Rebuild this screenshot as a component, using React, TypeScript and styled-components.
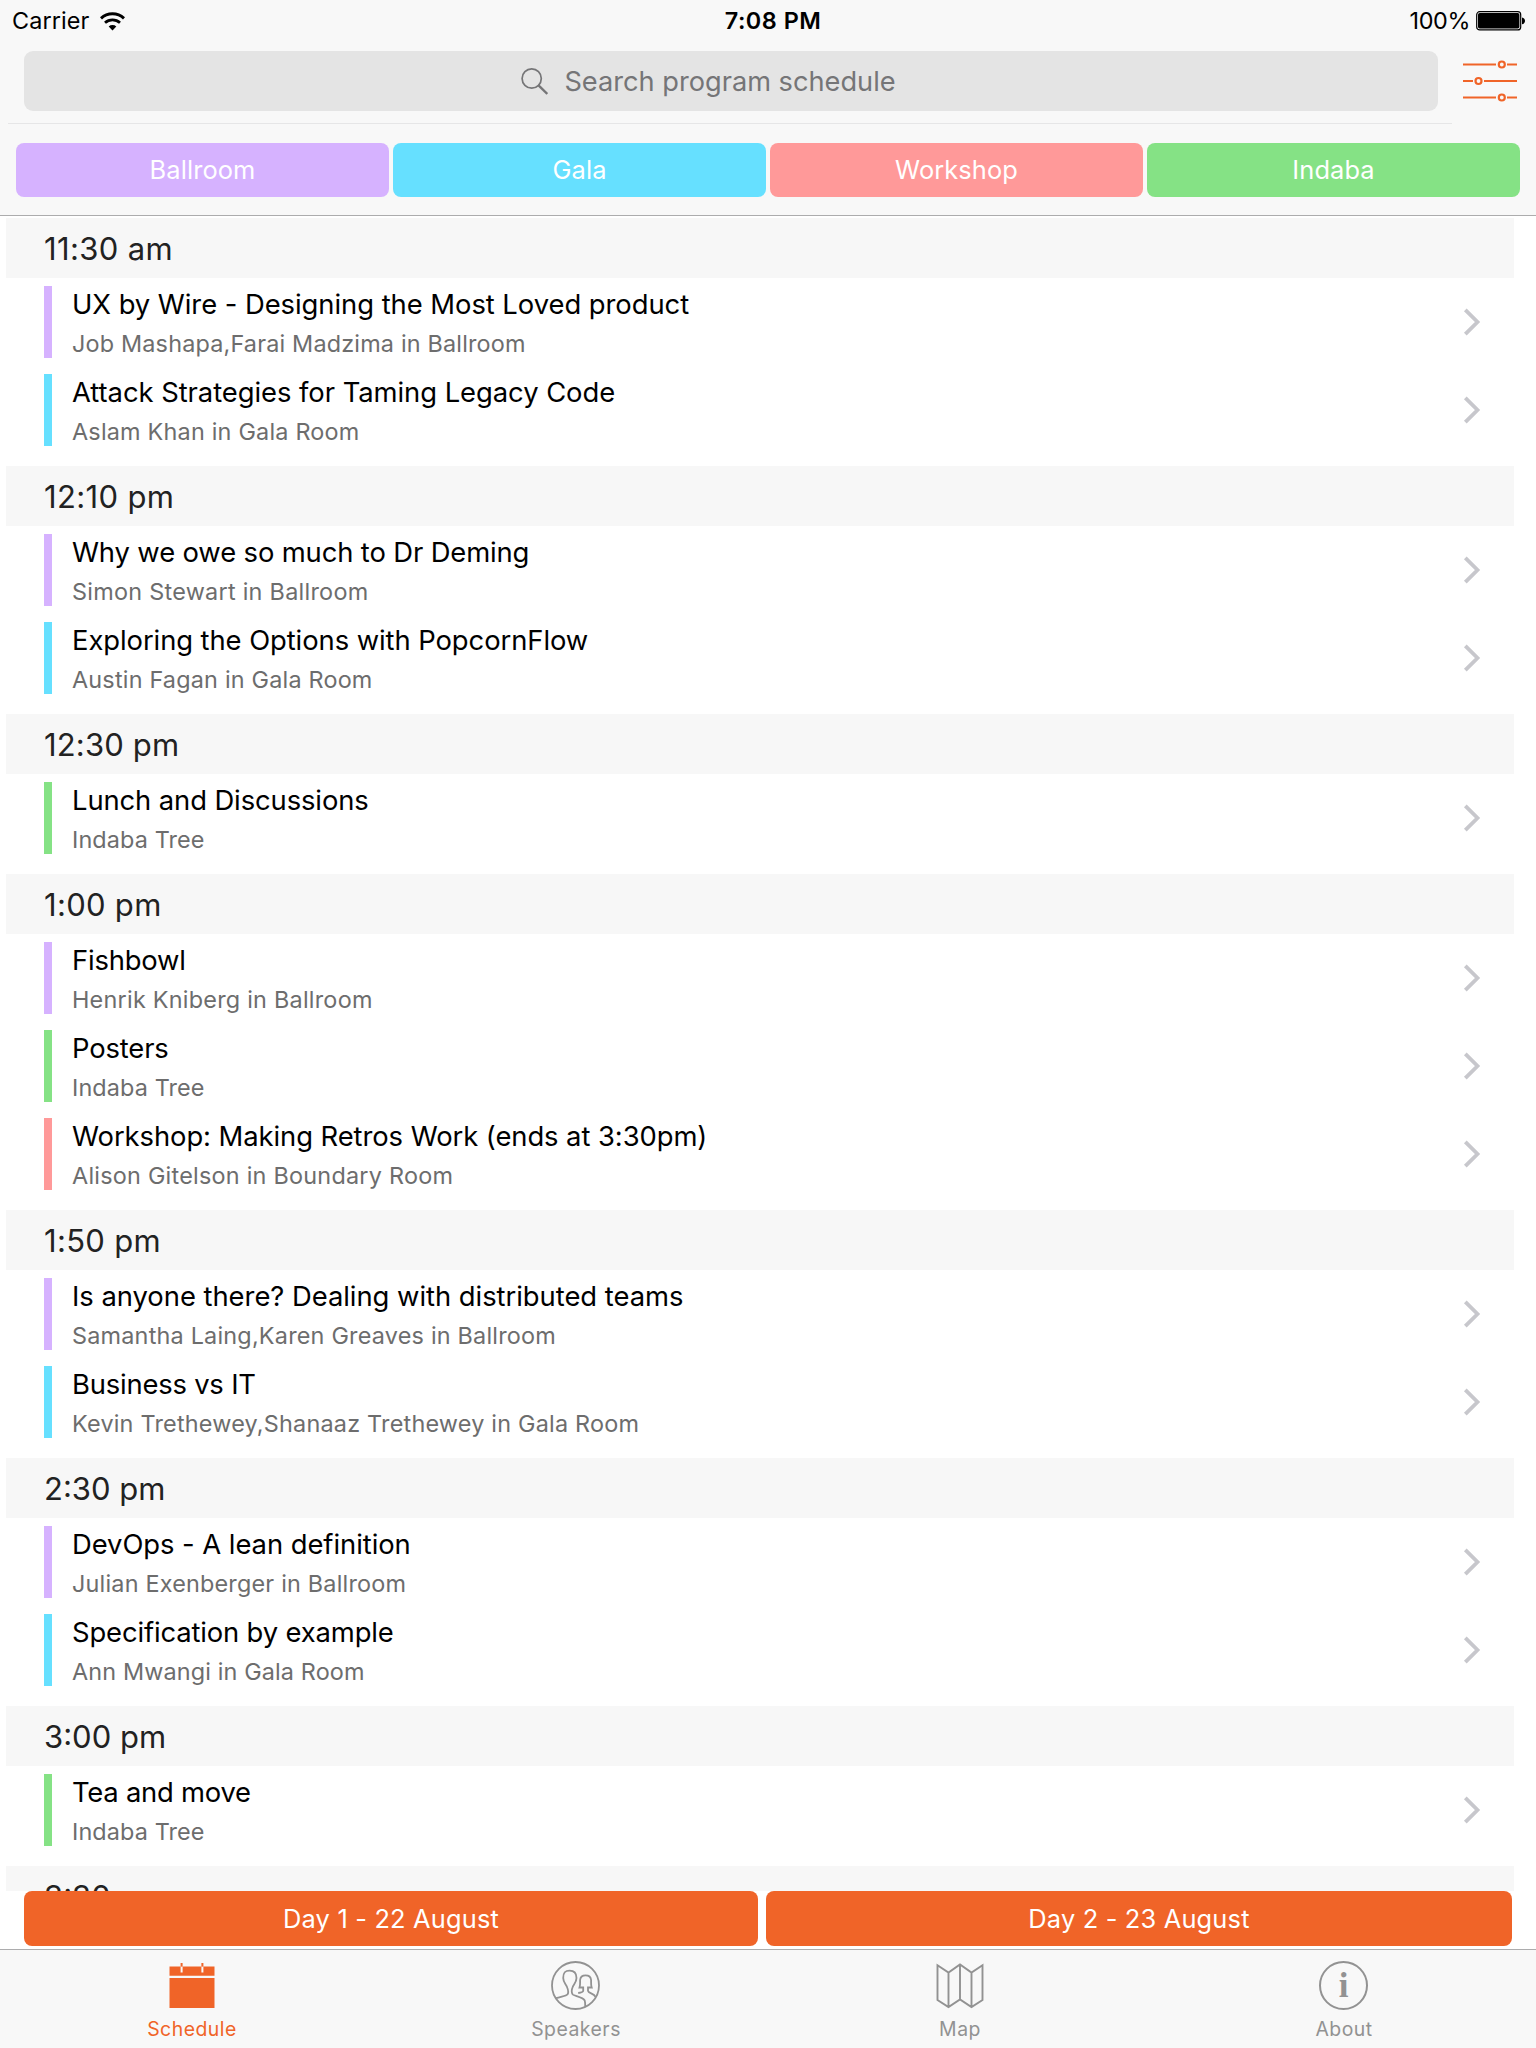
import React from "react";
import styled, { createGlobalStyle } from "styled-components";

const COLORS = {
  ballroom: "#d6b2ff",
  gala: "#66e0ff",
  workshop: "#ff9999",
  indaba: "#85e285",
  accent: "#f06428",
};

type Room = "ballroom" | "gala" | "workshop" | "indaba";

const GlobalStyle = createGlobalStyle`
  * { box-sizing: border-box; }
  body { margin: 0; background: #fff; }
`;

const Screen = styled.div`
  width: 1536px;
  height: 2048px;
  display: flex;
  flex-direction: column;
  overflow: hidden;
  background: #fff;
  font-family: Inter, "Liberation Sans", sans-serif;
  color: #000;
`;

const Header = styled.header`
  height: 216px;
  flex: none;
  background: #f8f8f8;
  border-bottom: 1px solid #acacad;
  display: flex;
  flex-direction: column;
`;

const StatusBar = styled.div`
  height: 40px;
  padding: 2px 10px 0 12px;
  display: grid;
  grid-template-columns: 1fr auto 1fr;
  align-items: center;
  font-size: 23.4px;
  line-height: 28px;
`;

const StatusSide = styled.div<{ $end?: boolean }>`
  display: flex;
  align-items: center;
  justify-content: ${(p) => (p.$end ? "flex-end" : "flex-start")};
  gap: ${(p) => (p.$end ? 6 : 11)}px;
  letter-spacing: ${(p) => (p.$end ? -0.4 : 0.1)}px;
`;

const Clock = styled.div`
  font-weight: 600;
  letter-spacing: 0.5px;
  padding-left: 8px;
`;

const SearchRow = styled.div`
  height: 84px;
  padding: 11px 18px 0 24px;
  display: flex;
  align-items: flex-start;
  gap: 24px;
`;

const SearchField = styled.div`
  width: 1414px;
  height: 60px;
  border-radius: 9px;
  background: #e4e4e4;
  color: #757577;
  display: flex;
  align-items: center;
  justify-content: center;
  gap: 16px;
  padding-right: 45px;
  font-size: 27.2px;
`;

const FilterButton = styled.div`
  height: 60px;
  display: flex;
  align-items: center;
`;

const Hairline = styled.div`
  height: 1px;
  margin: -1px 84px 0 8px;
  background: #e6e6e7;
`;

const Rooms = styled.div`
  margin-top: 19px;
  padding: 0 16px;
  display: grid;
  grid-template-columns: repeat(4, 1fr);
  gap: 4px;
`;

const RoomButton = styled.div<{ $room: Room }>`
  height: 54px;
  padding-bottom: 2px;
  border-radius: 8px;
  background: ${(p) => COLORS[p.$room]};
  color: #fff;
  display: flex;
  align-items: center;
  justify-content: center;
  font-size: 25.4px;
  letter-spacing: 0.1px;
`;

const List = styled.main`
  height: 1675px;
  flex: none;
  overflow: hidden;
  padding: 2px 22px 0 6px;
`;

const Section = styled.section`
  padding-bottom: 12px;
`;

const SectionTitle = styled.h2<{ $spacing: number }>`
  margin: 0;
  height: 60px;
  padding-left: 38px;
  background: #f7f7f7;
  color: #222;
  font-size: 31px;
  font-weight: 400;
  line-height: 62px;
  letter-spacing: ${(p) => p.$spacing}px;
`;

const Row = styled.div`
  height: 88px;
  padding: 8px 33px 8px 38px;
  display: flex;
  align-items: center;
`;

const RoomBar = styled.div<{ $room: Room }>`
  width: 8px;
  height: 72px;
  margin-right: 20px;
  background: ${(p) => COLORS[p.$room]};
`;

const RowText = styled.div`
  flex: 1;
  height: 72px;
`;

const TalkTitle = styled.div<{ $spacing: number }>`
  font-size: 27.4px;
  line-height: 36px;
  letter-spacing: ${(p) => p.$spacing}px;
`;

const TalkMeta = styled.div<{ $spacing: number }>`
  margin-top: 4px;
  color: #6d6d6d;
  font-size: 23.4px;
  line-height: 36px;
  letter-spacing: ${(p) => p.$spacing}px;
`;

const Days = styled.div`
  height: 58px;
  flex: none;
  padding: 0 24px;
  display: flex;
  gap: 8px;
`;

const DayButton = styled.div<{ $width: number }>`
  width: ${(p) => p.$width}px;
  height: 55px;
  border-radius: 8px;
  background: ${COLORS.accent};
  color: #fff;
  display: flex;
  align-items: center;
  justify-content: center;
  font-size: 25.4px;
  letter-spacing: 0.18px;
`;

const TabBar = styled.nav`
  height: 99px;
  border-top: 1px solid #acacad;
  background: #f8f8f8;
  display: grid;
  grid-template-columns: repeat(4, 1fr);
`;

const Tab = styled.div<{ $active?: boolean }>`
  display: flex;
  flex-direction: column;
  align-items: center;
  padding-top: 11px;
  color: ${(p) => (p.$active ? COLORS.accent : "#929292")};
  font-size: 19.4px;
  line-height: 24px;
  letter-spacing: 0.5px;
  svg { margin: 0 1px 6px 0; }
`;

const InfoGlyph = styled.div`
  width: 49px;
  height: 49px;
  margin: 0 1px 7px 0;
  border: 2px solid #929292;
  border-radius: 50%;
  display: flex;
  align-items: center;
  justify-content: center;
  font: bold 35px/45px "Liberation Serif", serif;
  letter-spacing: 0;
`;

const WifiIcon = () => (
  <svg width="25" height="19" viewBox="0 0 25 19" fill="none" stroke="#000">
    <path d="M1 6.3a17 17 0 0 1 23 0" strokeWidth="3" />
    <path d="M5 10.8a11.2 11.2 0 0 1 15 0" strokeWidth="2.8" />
    <path d="M12.5 18.4 8.7 14.6a5.6 5.6 0 0 1 7.6 0Z" fill="#000" stroke="none" />
  </svg>
);

const BatteryIcon = () => (
  <svg width="50" height="20" viewBox="0 0 50 20">
    <rect x="0.7" y="0.7" width="44" height="18.2" rx="3" fill="none" stroke="#000" strokeWidth="1.2" />
    <rect x="2" y="2" width="41.4" height="15.6" rx="1.8" fill="#000" />
    <path d="M46 6.4c4 .4 4 6.4 0 6.8Z" fill="#000" />
  </svg>
);

const SearchIcon = () => (
  <svg width="27" height="27" viewBox="0 0 27 27" fill="none" stroke="#757577">
    <circle cx="10.7" cy="10.5" r="9.6" strokeWidth="1.7" />
    <path d="m17.3 17.2 9 8.7" strokeWidth="2.4" />
  </svg>
);

const FilterIcon = () => (
  <svg width="56" height="44" viewBox="0 0 56 44" fill="none" stroke={COLORS.accent} strokeWidth="2">
    <path d="M1 5.500h33M45 5.500h10M1 22h10M22 22h33M1 38.500h33M45 38.500h10" />
    <g strokeWidth="2.2">
      <circle cx="39.8" cy="5.5" r="3" />
      <circle cx="16.5" cy="22" r="3" />
      <circle cx="39.8" cy="38.5" r="3" />
    </g>
  </svg>
);

const Chevron = () => (
  <svg width="18" height="28" viewBox="0 0 18 28" fill="none" stroke="#c7c7cc" strokeWidth="3.8">
    <path d="M2.300 1.800 14.500 14 2.300 26.200" />
  </svg>
);

const CalendarIcon = () => (
  <svg width="46" height="50" viewBox="0 0 46 50">
    <path fill={COLORS.accent} d="M.5 5.500h45v9.300H.5zM.5 17h45v30H.5z" />
    <path stroke="#f8f8f8" strokeWidth="2" d="M12.600 5.500v6M33.400 5.500v6" />
    <path stroke={COLORS.accent} strokeWidth="2" d="M12.600 2V5.500M33.400 2V5.500" />
  </svg>
);

const SpeakersIcon = () => (
  <svg width="49" height="50" viewBox="0 0 49 50" fill="none" stroke="#929292" strokeWidth="1.8">
    <circle cx="24.5" cy="24.5" r="23.5" />
    <path d="M5 37.200c4.300-1.700 10.200-2.200 11.400-3.700 1.300-1.700.5-5.500-.6-8-1.200-2.400-3.600-4.500-3.600-8.500C12.200 11.500 14 9.600 18.600 9.600s6.900 1.900 6.900 7.400c0 4-2.400 6.100-3.600 8.500-1.100 2.500-1.500 6.300-.2 8 1.300 1.500 10.300 2.500 12 6 .6 2 .5 4 .5 6.300" />
    <path d="M27.200 32c2.500-.4 4.800-1 5-2.200v-3.300h-3.700c1-2.500.5-5.300.6-7.500.3-3.200 2.400-4.600 5.500-4.600s5.200 1.400 5.500 4.600c.1 2.200-.4 5 .6 7.500H37v3.300c.4 2.600 6 2.500 7.500 6" />
  </svg>
);

const MapIcon = () => (
  <svg width="48" height="50" viewBox="0 0 48 50" fill="none" stroke="#929292" strokeWidth="1.9">
    <path d="M1.500 4.300 12.500 11.500 24 3.500l11.500 8L46.500 4.300V39L35.500 46 24 38.500 12.500 46 1.500 39ZM12.500 11.500V46M24 3.500v35M35.500 11.500V46" />
  </svg>
);

interface Talk {
  title: string;
  meta: string;
  room: Room;
  /** Tracking of the title and of the line below it, in px. */
  ts: number;
  ms: number;
}

const schedule: { time: string; spacing: number; talks: Talk[] }[] = [
  {
    time: "11:30 am",
    spacing: 0.35,
    talks: [
      { title: "UX by Wire - Designing the Most Loved product", meta: "Job Mashapa,Farai Madzima in Ballroom", room: "ballroom", ts: -0.045, ms: 0.18 },
      { title: "Attack Strategies for Taming Legacy Code", meta: "Aslam Khan in Gala Room", room: "gala", ts: -0.05, ms: 0.21 },
    ],
  },
  {
    time: "12:10 pm",
    spacing: 0.35,
    talks: [
      { title: "Why we owe so much to Dr Deming", meta: "Simon Stewart in Ballroom", room: "ballroom", ts: -0.13, ms: 0.27 },
      { title: "Exploring the Options with PopcornFlow", meta: "Austin Fagan in Gala Room", room: "gala", ts: -0.07, ms: 0.2 },
    ],
  },
  {
    time: "12:30 pm",
    spacing: 0.15,
    talks: [{ title: "Lunch and Discussions", meta: "Indaba Tree", room: "indaba", ts: -0.1, ms: 0.12 }],
  },
  {
    time: "1:00 pm",
    spacing: 0.3,
    talks: [
      { title: "Fishbowl", meta: "Henrik Kniberg in Ballroom", room: "ballroom", ts: -0.2, ms: 0.24 },
      { title: "Posters", meta: "Indaba Tree", room: "indaba", ts: -0.15, ms: 0.12 },
      { title: "Workshop: Making Retros Work (ends at 3:30pm)", meta: "Alison Gitelson in Boundary Room", room: "workshop", ts: -0.07, ms: 0.24 },
    ],
  },
  {
    time: "1:50 pm",
    spacing: 0.3,
    talks: [
      { title: "Is anyone there? Dealing with distributed teams", meta: "Samantha Laing,Karen Greaves in Ballroom", room: "ballroom", ts: -0.03, ms: 0.21 },
      { title: "Business vs IT", meta: "Kevin Trethewey,Shanaaz Trethewey in Gala Room", room: "gala", ts: -0.2, ms: 0.21 },
    ],
  },
  {
    time: "2:30 pm",
    spacing: 0,
    talks: [
      { title: "DevOps - A lean definition", meta: "Julian Exenberger in Ballroom", room: "ballroom", ts: -0.05, ms: 0.2 },
      { title: "Specification by example", meta: "Ann Mwangi in Gala Room", room: "gala", ts: -0.14, ms: 0.14 },
    ],
  },
  {
    time: "3:00 pm",
    spacing: 0,
    talks: [{ title: "Tea and move", meta: "Indaba Tree", room: "indaba", ts: -0.24, ms: 0.12 }],
  },
  { time: "3:30 pm", spacing: 0, talks: [] },
];

export default function App() {
  return (
    <Screen>
      <GlobalStyle />
      <Header>
        <StatusBar>
          <StatusSide>
            <span>Carrier</span>
            <WifiIcon />
          </StatusSide>
          <Clock>7:08 PM</Clock>
          <StatusSide $end>
            <span>100%</span>
            <BatteryIcon />
          </StatusSide>
        </StatusBar>
        <SearchRow>
          <SearchField>
            <SearchIcon />
            <span>Search program schedule</span>
          </SearchField>
          <FilterButton>
            <FilterIcon />
          </FilterButton>
        </SearchRow>
        <Hairline />
        <Rooms>
          <RoomButton $room="ballroom">Ballroom</RoomButton>
          <RoomButton $room="gala">Gala</RoomButton>
          <RoomButton $room="workshop">Workshop</RoomButton>
          <RoomButton $room="indaba">Indaba</RoomButton>
        </Rooms>
      </Header>
      <List>
        {schedule.map((slot) => (
          <Section key={slot.time}>
            <SectionTitle $spacing={slot.spacing}>{slot.time}</SectionTitle>
            {slot.talks.map((talk) => (
              <Row key={talk.title}>
                <RoomBar $room={talk.room} />
                <RowText>
                  <TalkTitle $spacing={talk.ts}>{talk.title}</TalkTitle>
                  <TalkMeta $spacing={talk.ms}>{talk.meta}</TalkMeta>
                </RowText>
                <Chevron />
              </Row>
            ))}
          </Section>
        ))}
      </List>
      <Days>
        <DayButton $width={734}>Day 1 - 22 August</DayButton>
        <DayButton $width={746}>Day 2 - 23 August</DayButton>
      </Days>
      <TabBar>
        <Tab $active>
          <CalendarIcon />
          Schedule
        </Tab>
        <Tab>
          <SpeakersIcon />
          Speakers
        </Tab>
        <Tab>
          <MapIcon />
          Map
        </Tab>
        <Tab>
          <InfoGlyph>i</InfoGlyph>
          About
        </Tab>
      </TabBar>
    </Screen>
  );
}
